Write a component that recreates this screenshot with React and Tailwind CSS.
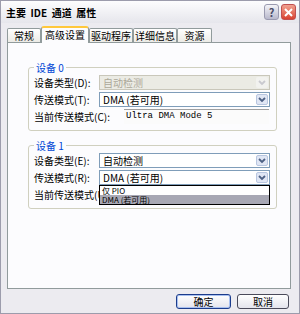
import React from "react";

const font = { fontFamily: '"Noto Sans CJK SC", "DejaVu Sans", sans-serif' };

// === SMALL PIECES ===
const Chevron = ({ disabled }) => (
  <svg width="8" height="6" viewBox="0 0 8 6">
    <path d="M1 1 L4 4 L7 1" fill="none" stroke={disabled ? "#c9c9cf" : "#4d6185"} strokeWidth="1.8" />
  </svg>
);

const Combo = ({ value, disabled }) => (
  <div className={`flex h-[15px] w-[171px] items-stretch border ${disabled ? "border-[#c9c7ba] bg-[#ebebe4]" : "border-[#7f9db9] bg-white"}`}>
    <div className={`flex-1 pl-[3px] text-[10px] leading-[13px] ${disabled ? "text-[#aca899]" : "text-black"}`}>{value}</div>
    <div className={`m-px flex w-[12px] items-center justify-center rounded-[2px] ${disabled ? "bg-[#f2f2ef]" : "border border-[#b8c6e0] bg-[#e0e6f4]"}`}>
      <Chevron disabled={disabled} />
    </div>
  </div>
);

const Row = ({ label, children }) => (
  <div className="flex h-[15px] items-center">
    <div className="w-[65px] text-[10px] text-black">{label}</div>
    {children}
  </div>
);

const Group = ({ title, children }) => (
  <div className="relative ml-[20px] mr-[13px] rounded-[3px] border border-[#d0d0bf] px-[5px] pb-[6px] pt-[7px]">
    <div className="absolute -top-[7px] left-[5px] bg-[#fcfcfe] px-[2px] text-[10px] leading-[13px] text-[#0046d5]">{title}</div>
    <div className="flex flex-col gap-[2px]">{children}</div>
  </div>
);

const tabs = [
  { t: "常规", w: "w-[34px]" },
  { t: "高级设置", w: "w-[48px]", active: true },
  { t: "驱动程序", w: "w-[44px]" },
  { t: "详细信息", w: "w-[44px]" },
  { t: "资源", w: "w-[35px]" },
];

export default function App() {
  return (
    <div className="flex h-[314px] w-[300px] flex-col overflow-hidden border border-[#9c9cac] bg-[#ecebf0]" style={font}>
      {/* TITLE BAR */}
      <div className="flex h-[22px] items-center justify-between bg-gradient-to-b from-[#fdfdfe] to-[#e6e6ec] pl-[5px] pr-[3px]">
        <div className="whitespace-pre text-[10px] font-bold text-black">主要  IDE  通道  属性</div>
        <div className="flex gap-[2px]">
          <div className="flex h-[16px] w-[15px] items-center justify-center rounded-[3px] border border-[#9a9ab0] bg-gradient-to-b from-[#f4f4f8] to-[#b8b8cc] text-[11px] font-bold leading-none text-[#4a4a66]">?</div>
          <div className="flex h-[16px] w-[15px] items-center justify-center rounded-[3px] border border-[#c05050] bg-gradient-to-b from-[#f0a090] to-[#d84030]">
            <svg width="9" height="9" viewBox="0 0 9 9"><path d="M1 1 L8 8 M8 1 L1 8" stroke="white" strokeWidth="2" /></svg>
          </div>
        </div>
      </div>

      {/* BODY */}
      <div className="flex flex-1 flex-col pl-[6px] pr-[8px] pt-[3px]">
        {/* TABS */}
        <div className="flex h-[16px] items-end">
          {tabs.map((tab) =>
            tab.active ? (
              <div key={tab.t} className={`relative z-10 -mb-px h-[17px] ${tab.w} rounded-t-[3px] border-x border-t-[2px] border-[#919b9c] border-t-[#ffc83c] bg-[#fcfcfe] text-center text-[10px] leading-[14px]`}>{tab.t}</div>
            ) : (
              <div key={tab.t} className={`h-[14px] ${tab.w} rounded-t-[2px] border-x border-t border-[#919b9c] bg-gradient-to-b from-white to-[#ecebe6] text-center text-[10px] leading-[13px]`}>{tab.t}</div>
            )
          )}
        </div>

        {/* PANEL */}
        <div className="flex h-[247px] flex-col border border-[#919b9c] bg-[#fcfcfe] pt-[24px]">
          <Group title="设备 0">
            <Row label="设备类型(D):"><Combo value="自动检测" disabled /></Row>
            <Row label="传送模式(T):"><Combo value="DMA (若可用)" /></Row>
            <div className="flex h-[15px] items-center">
              <div className="w-[90px] text-[10px] text-black">当前传送模式(C):</div>
              <div className="h-[15px] w-[145px] border-t border-t-[#a0a0a0] bg-[#fbfbfb] pl-[2px] font-mono text-[9px] leading-[13px] text-black">Ultra DMA Mode 5</div>
            </div>
          </Group>

          <div className="mt-[14px]">
            <Group title="设备 1">
              <Row label="设备类型(E):"><Combo value="自动检测" /></Row>
              <Row label="传送模式(R):">
                <div className="relative">
                  <Combo value="DMA (若可用)" />
                  <div className="absolute left-0 top-[15px] z-10 w-[171px] border border-black bg-white text-[8px] leading-[9px]">
                    <div className="h-[9px] overflow-hidden pl-[2px]">仅 PIO</div>
                    <div className="h-[9px] overflow-hidden bg-[#a8a8b4] pl-[2px]">DMA (若可用)</div>
                  </div>
                </div>
              </Row>
              <div className="flex h-[15px] items-center">
                <div className="w-[65px] overflow-hidden whitespace-nowrap text-[10px] text-black">当前传送模式(U):</div>
              </div>
            </Group>
          </div>
        </div>

        {/* BUTTONS */}
        <div className="mt-[5px] flex justify-end gap-[6px] pr-[2px]">
          <div className="flex h-[15px] w-[55px] items-center justify-center rounded-[3px] border border-[#1c3c8c] bg-gradient-to-b from-white to-[#e4e4ec] text-[10px] shadow-[inset_0_0_0_1px_#a8c0f0]">确定</div>
          <div className="flex h-[15px] w-[52px] items-center justify-center rounded-[3px] border border-[#4a4a5a] bg-gradient-to-b from-white to-[#e4e4ec] text-[10px]">取消</div>
        </div>
      </div>
    </div>
  );
}
